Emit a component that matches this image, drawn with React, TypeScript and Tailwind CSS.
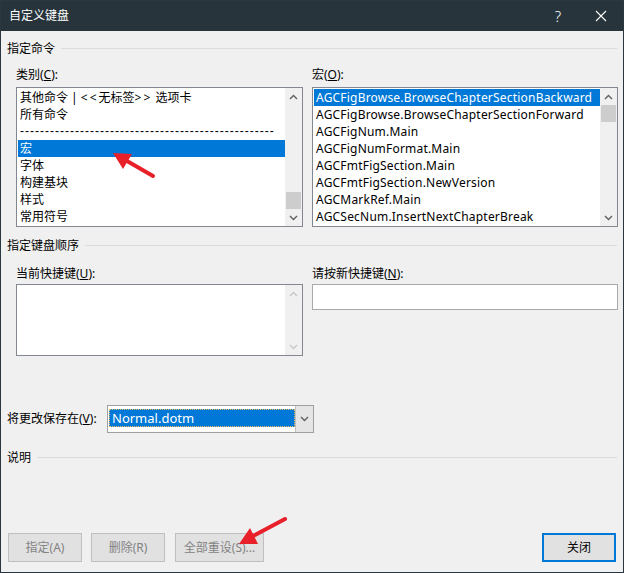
import React from "react";

const FONT = { fontFamily: '"Noto Sans", "Noto Sans CJK SC", sans-serif' };

function Chevron({ up, color }: { up?: boolean; color: string }) {
  return (
    <svg width="9" height="6" viewBox="0 0 9 6">
      <path
        d={up ? "M1 5 L4.5 1.5 L8 5" : "M1 1 L4.5 4.5 L8 1"}
        fill="none"
        stroke={color}
        strokeWidth="1.4"
      />
    </svg>
  );
}

function ScrollBar({ thumb, disabled }: { thumb?: "top" | "bottom"; disabled?: boolean }) {
  const c = disabled ? "#c8c8c8" : "#606060";
  return (
    <div className="w-[17px] flex flex-col bg-[#f0f0f0]">
      <div className="h-[17px] flex items-center justify-center">
        <Chevron up color={c} />
      </div>
      <div className={"flex-1 flex flex-col px-[1px] " + (thumb === "bottom" ? "justify-end" : "justify-start")}>
        {thumb && <div className="h-[17px] bg-[#cdcdcd]" />}
      </div>
      <div className="h-[17px] flex items-center justify-center">
        <Chevron color={c} />
      </div>
    </div>
  );
}

function Heading({ text }: { text: string }) {
  return (
    <div className="h-[17px] flex items-center pl-[6px] pr-[6px]">
      <span className="text-[12px] leading-[17px] text-black whitespace-nowrap">{text}</span>
      <div className="flex-1 h-px bg-[#dcdcdc] ml-[6px]" />
    </div>
  );
}

function ListBox({
  items,
  selected,
  thumb,
  width,
  latin,
}: {
  items: React.ReactNode[];
  selected: number;
  thumb: "top" | "bottom";
  width: string;
  latin?: boolean;
}) {
  return (
    <div className={"h-[140px] border border-[#828790] bg-white flex " + width}>
      <div className="flex-1 pl-[1px] py-[1px] overflow-hidden">
        {items.map((t, i) => (
          <div
            key={i}
            className={
              "h-[17px] leading-[17px] text-[12px] pl-[2px] whitespace-nowrap overflow-hidden " +
              (latin ? "tracking-[0.2px] " : "") +
              (i === selected ? "bg-[#0078d7] text-white" : "text-black")
            }
          >
            {t}
          </div>
        ))}
      </div>
      <ScrollBar thumb={thumb} />
    </div>
  );
}

function Btn({ children, disabled, primary, width }: { children: React.ReactNode; disabled?: boolean; primary?: boolean; width: string }) {
  return (
    <div
      className={
        "h-[29px] flex items-center justify-center text-[12px] bg-[#e1e1e1] " +
        width +
        " " +
        (primary ? "border-2 border-[#0078d7] text-black" : "border border-[#bfbfbf] text-[#838383]")
      }
    >
      {children}
    </div>
  );
}

export default function App() {
  const leftItems: React.ReactNode[] = [
    <span>
      其他命令 | <span className="tracking-[2px]">&lt;&lt;</span>无标签<span className="tracking-[2px]">&gt;&gt;</span> 选项卡
    </span>,
    "所有命令",
    <span className="inline-block w-[256px] overflow-hidden tracking-[1px] align-top" style={{ fontFamily: '"Liberation Sans", sans-serif' }}>
      {"-".repeat(51)}
    </span>,
    "宏",
    "字体",
    "构建基块",
    "样式",
    "常用符号",
  ];
  const rightItems = [
    "AGCFigBrowse.BrowseChapterSectionBackward",
    "AGCFigBrowse.BrowseChapterSectionForward",
    "AGCFigNum.Main",
    "AGCFigNumFormat.Main",
    "AGCFmtFigSection.Main",
    "AGCFmtFigSection.NewVersion",
    "AGCMarkRef.Main",
    "AGCSecNum.InsertNextChapterBreak",
  ];
  return (
    <div style={FONT} className="relative w-[624px] h-[573px] border border-[#2b3740] bg-[#f0f0f0] flex flex-col overflow-hidden">
      {/* Title bar */}
      <div className="h-[30px] bg-[#27343c] flex items-center text-white">
        <span className="ml-[8px] text-[12px]">自定义键盘</span>
        <span className="ml-auto mr-[34px] text-[15px] font-light leading-none">?</span>
        <svg width="12" height="12" viewBox="0 0 12 12" className="mr-[16px]">
          <path d="M1 1 L11 11 M11 1 L1 11" stroke="white" strokeWidth="1.1" />
        </svg>
      </div>

      <div className="mt-[9px]">
        <Heading text="指定命令" />
      </div>

      <div className="mt-[9px] h-[17px] flex text-[12px] leading-[17px]">
        <span className="ml-[15px] w-[296px]">
          类别(<span className="underline">C</span>):
        </span>
        <span>
          宏(<span className="underline">O</span>):
        </span>
      </div>

      <div className="mt-[4px] flex pl-[15px]">
        <ListBox items={leftItems} selected={3} thumb="bottom" width="w-[287px]" />
        <div className="w-[9px]" />
        <ListBox items={rightItems} selected={0} thumb="top" width="w-[306px]" latin />
      </div>

      <div className="mt-[10px]">
        <Heading text="指定键盘顺序" />
      </div>

      <div className="mt-[11px] h-[17px] flex text-[12px] leading-[17px]">
        <span className="ml-[15px] w-[296px]">
          当前快捷键(<span className="underline">U</span>):
        </span>
        <span>
          请按新快捷键(<span className="underline">N</span>):
        </span>
      </div>

      <div className="mt-[2px] flex items-start pl-[15px]">
        <div className="w-[287px] h-[72px] border border-[#828790] bg-white flex">
          <div className="flex-1" />
          <ScrollBar disabled />
        </div>
        <div className="w-[9px]" />
        <div className="w-[306px] h-[26px] border border-[#a9a9a9] bg-white" />
      </div>

      <div className="mt-[49px] h-[28px] flex items-center">
        <span className="ml-[6px] w-[100px] text-[12px]">
          将更改保存在(<span className="underline">V</span>):
        </span>
        <div className="w-[207px] h-[28px] border border-[#a0a0a0] bg-white flex">
          <div className="flex-1 pl-[1px] pt-[3px] pb-[5px]">
            <div className="h-full bg-[#0078d7] border border-dotted border-[#f0c060] text-white text-[13px] leading-[16px] pl-[2px]">
              Normal.dotm
            </div>
          </div>
          <div className="w-[18px] bg-[#e5e5e5] border-l border-[#c0c0c0] flex items-center justify-center">
            <Chevron color="#606060" />
          </div>
        </div>
      </div>

      <div className="mt-[16px]">
        <Heading text="说明" />
      </div>

      <div className="mt-[67px] flex pl-[7px] pr-[7px]">
        <Btn disabled width="w-[74px]">指定(A)</Btn>
        <div className="w-[9px]" />
        <Btn disabled width="w-[74px]">删除(R)</Btn>
        <div className="w-[10px]" />
        <Btn disabled width="w-[89px]">全部重设(S)...</Btn>
        <div className="flex-1" />
        <Btn primary width="w-[74px]">关闭</Btn>
      </div>

      {/* annotation arrows */}
      <svg className="absolute left-0 top-0 pointer-events-none" width="624" height="573" viewBox="0 0 624 573">
        <line x1="152" y1="175" x2="126" y2="160" stroke="#e8202a" strokeWidth="4" strokeLinecap="round" />
        <polygon points="112,152 131,153 122,168" fill="#e8202a" />
        <line x1="284" y1="518" x2="252" y2="535" stroke="#e8202a" strokeWidth="4" strokeLinecap="round" />
        <polygon points="238,543 257,543 249,527" fill="#e8202a" />
      </svg>
    </div>
  );
}
